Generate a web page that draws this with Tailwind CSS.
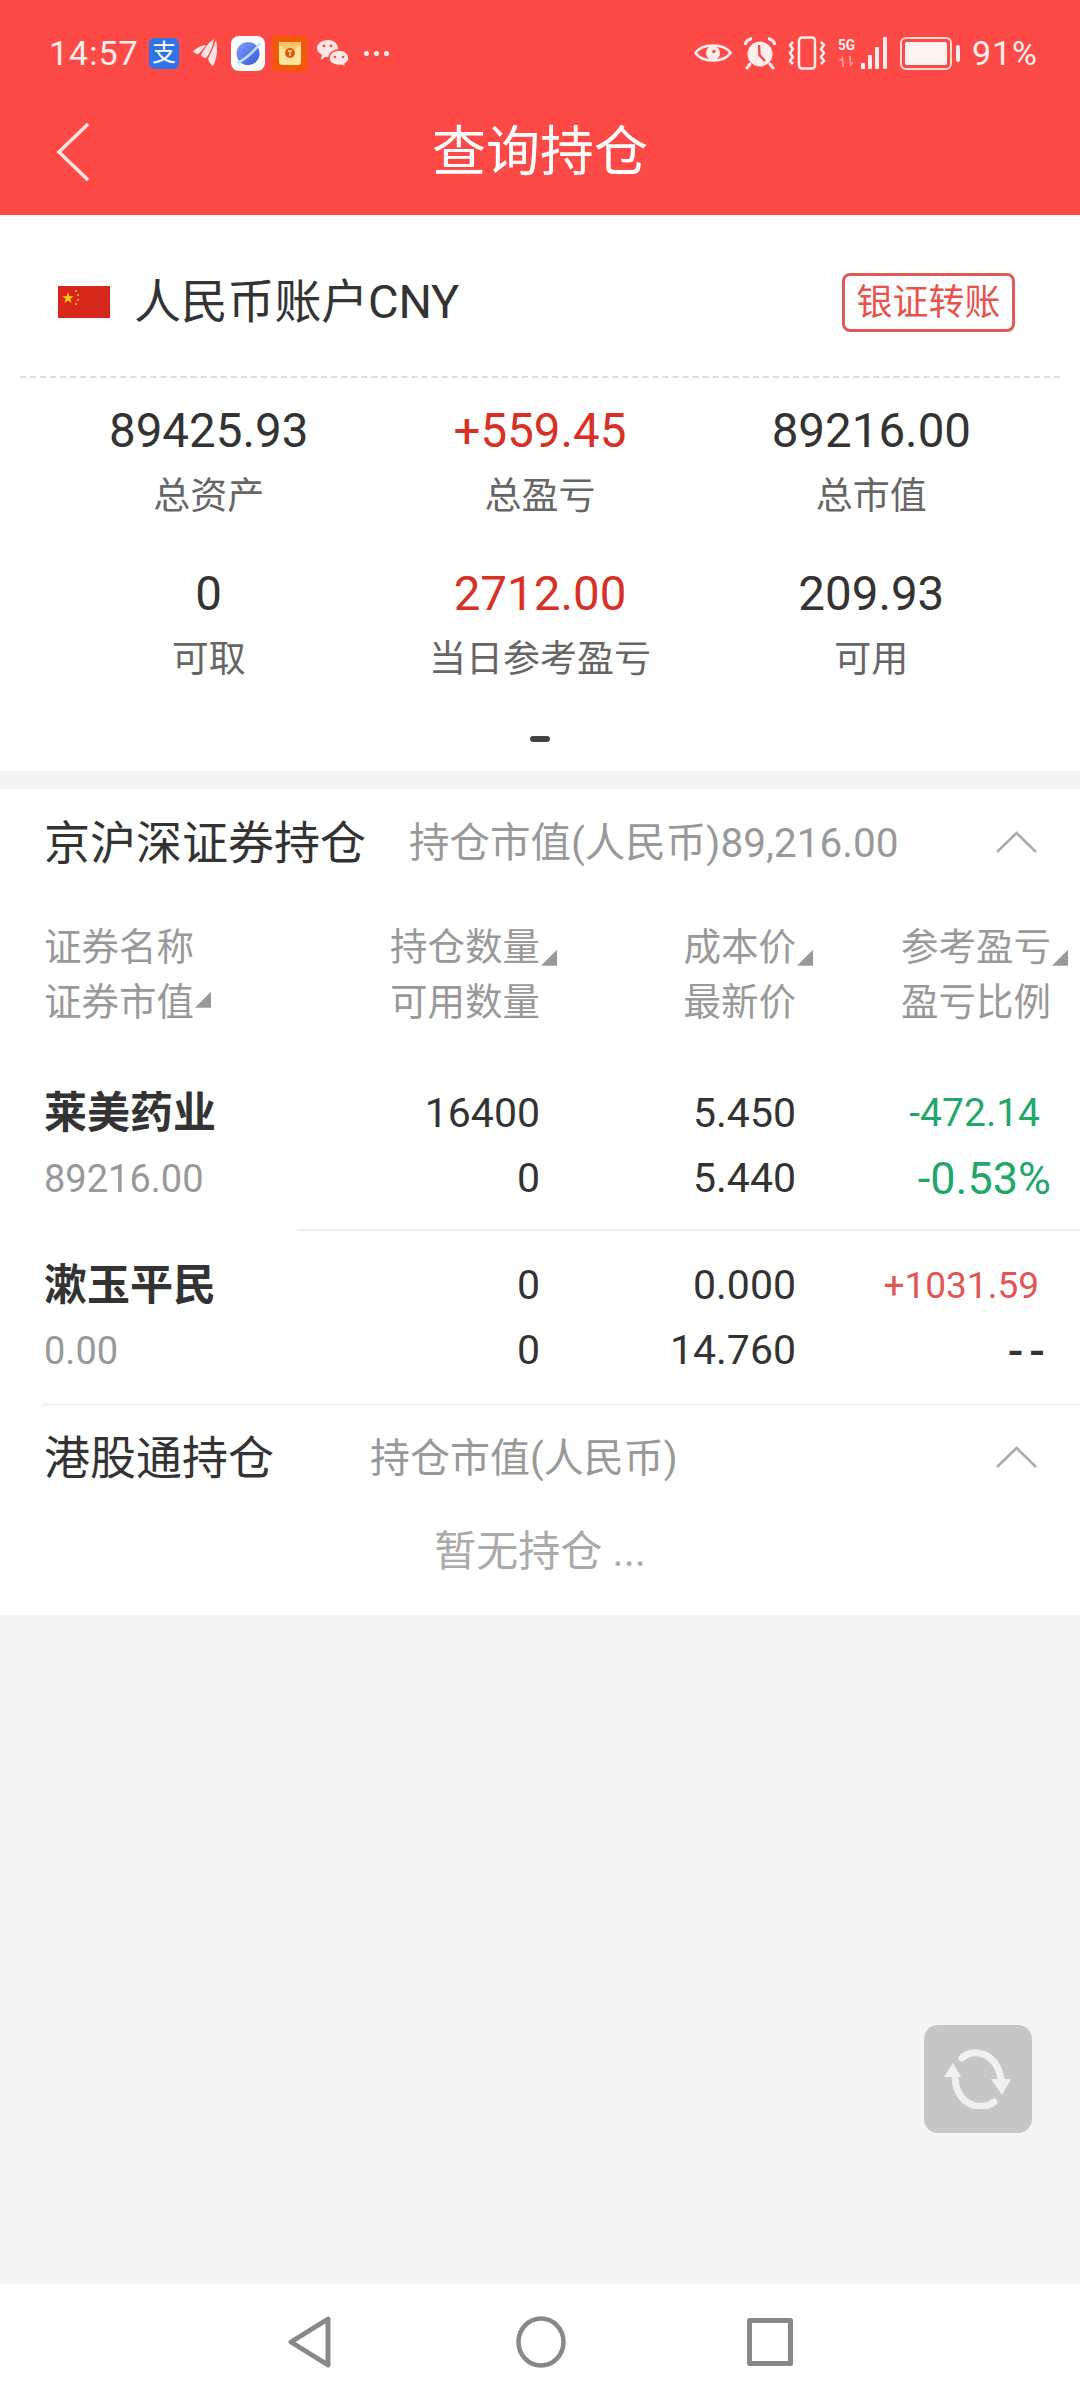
<!DOCTYPE html>
<html lang="zh-CN">
<head>
  <meta charset="UTF-8"/>
  <meta name="viewport" content="width=device-width,initial-scale=1.0"/>
  <title>查询持仓</title>
  <script src="https://cdn.jsdelivr.net/npm/@tailwindcss/browser@4"></script>
</head>
<body class="bg-[#f5f5f5] text-[#333] font-[Roboto,'Noto_Sans_CJK_SC',sans-serif]">
<div class="relative w-[1080px] h-[2400px] flex flex-col overflow-hidden">

  <!-- HEADER -->
  <div class="bg-[#fe4a46] text-white">
    <!-- status bar -->
    <div class="h-[106px] flex items-center pl-[49px] pr-[42px] text-[#ffeeee]">
      <span class="text-[34px] leading-none tracking-[1px] w-[90px]">14:57</span>
      <!-- alipay -->
      <span class="ml-[10px] w-[30px] h-[31px] rounded-[6px] bg-[#2f73e8] text-white text-[24px] leading-[31px] text-center">支</span>
      <!-- swallow -->
      <svg class="ml-[14px]" width="25" height="30" viewBox="0 0 25 30" fill="#ffe5e3"><path d="M0 13 C5 9 9 7 13 7 C10 11 7 15 5 16 C3 16 1 15 0 13Z"/><path d="M8 17 C11 11 15 5 21 1 C20 8 17 15 13 20 C11 20 9 19 8 17Z"/><path d="M15 21 C18 15 21 8 23 2 C25 10 24 21 20 28 C18 27 16 24 15 21Z"/></svg>
      <!-- planet -->
      <svg class="ml-[13px]" width="34" height="35" viewBox="0 0 34 35"><defs><linearGradient id="pl" x1="0" y1="0" x2="1" y2="1"><stop offset="0" stop-color="#7fa0ff"/><stop offset="1" stop-color="#3557d8"/></linearGradient></defs><rect width="34" height="35" rx="8" fill="#fff"/><circle cx="17" cy="17.5" r="11.5" fill="url(#pl)"/><path d="M6 27 C12 25 24 15 29 7" stroke="#bfe0ff" stroke-width="2.5" fill="none"/></svg>
      <!-- red packet -->
      <svg class="ml-[8px]" width="34" height="35" viewBox="0 0 34 35"><rect width="34" height="35" fill="#f45a06"/><rect x="6" y="6" width="22" height="23" rx="3" fill="#ffe59a"/><path d="M6 9 L17 17 L28 9 L28 6 L6 6Z" fill="#f8c66a"/><circle cx="17" cy="17" r="5" fill="#e2570c"/><path d="M15 15h4M17 15v5" stroke="#ffe59a" stroke-width="1.3"/></svg>
      <!-- wechat -->
      <svg class="ml-[10px]" width="32" height="29" viewBox="0 0 32 29" fill="#ffe8e6"><path d="M11 1 C17 1 21 5 21 9 C21 13 17 18 11 18 L8 18 L4 21 L5 16 C2 14 0 12 0 9 C0 5 5 1 11 1Z"/><path d="M22 11 C27 11 32 14 32 19 C32 22 30 24 28 25 L29 28 L25 26.5 C19 27 12 25 12 19 C12 14 17 11 22 11Z" stroke="#fe4a46" stroke-width="1.5"/><g fill="#fe4a46"><circle cx="7" cy="7" r="1.4"/><circle cx="14" cy="7" r="1.4"/><circle cx="18" cy="18" r="1.3"/><circle cx="26" cy="18" r="1.3"/></g></svg>
      <!-- dots -->
      <span class="ml-[15px] flex gap-[5px]"><i class="block w-[5px] h-[5px] rounded-full bg-[#ffeeee]"></i><i class="block w-[5px] h-[5px] rounded-full bg-[#ffeeee]"></i><i class="block w-[5px] h-[5px] rounded-full bg-[#ffeeee]"></i></span>

      <div class="ml-auto flex items-center">
        <!-- eye -->
        <svg width="38" height="26" viewBox="0 0 38 26"><path d="M1.5 13 C8 3 30 3 36.5 13 C30 23 8 23 1.5 13Z" fill="none" stroke="#ffeeee" stroke-width="2.5"/><circle cx="19" cy="13" r="7" fill="#ffeeee"/><circle cx="20" cy="11.5" r="1.8" fill="#fe4a46"/></svg>
        <!-- alarm -->
        <svg class="ml-[12px]" width="32" height="33" viewBox="0 0 32 33"><circle cx="16" cy="17" r="12.5" fill="#ffeeee"/><path d="M1 8 C2 4 5 2 8 1.5 M31 8 C30 4 27 2 24 1.5" stroke="#ffeeee" stroke-width="3" fill="none"/><path d="M6 27 L3 31 M26 27 L29 31" stroke="#ffeeee" stroke-width="3" stroke-linecap="round"/><path d="M15 8 L15.500 18 L21 24" stroke="#fe4a46" stroke-width="2.4" fill="none"/></svg>
        <!-- vibrate -->
        <svg class="ml-[12px]" width="38" height="34" viewBox="0 0 38 34" fill="none" stroke="#ffeeee" stroke-width="2.500"><rect x="11" y="1.500" width="16" height="31" rx="3"/><path d="M5 6 L2 9 L5 13 L2 17 L5 21 L2 25 L5 28"/><path d="M33 6 L36 9 L33 13 L36 17 L33 21 L36 25 L33 28"/></svg>
        <!-- 5G and signal -->
        <svg class="ml-[12px]" width="50" height="34" viewBox="0 0 50 34"><text x="0" y="14" font-size="15" font-weight="700" fill="#ffeeee" font-family="Roboto" textLength="17" lengthAdjust="spacingAndGlyphs">5G</text><path d="M5 20 L1 25 L4 25 L4 31 L6 31 Z M12 31 L16 26 L13 26 L13 20 L11 20 Z" fill="#ff9a96"/><g fill="#ffeeee"><rect x="23" y="27" width="4" height="6" rx="1"/><rect x="30" y="19" width="4" height="14" rx="1"/><rect x="37" y="11" width="4" height="22" rx="1"/><rect x="45" y="1" width="4" height="32" rx="1"/></g></svg>
        <!-- battery -->
        <div class="ml-[12px] w-[52px] h-[33px] rounded-[6px] border-[2.5px] border-[#ffdcda] p-[3px]"><div class="w-full h-full rounded-[2px] bg-[#fff3f2]"></div></div>
        <div class="ml-[4px] w-[4px] h-[17px] rounded-[2px] bg-[#ffeeee]"></div>
        <span class="ml-[12px] text-[34px] leading-none tracking-[1px]">91%</span>
      </div>
    </div>
    <!-- nav -->
    <div class="relative h-[109px] pb-[16px] flex items-center justify-center">
      <svg class="absolute left-[56px] top-[16px]" width="34" height="60" viewBox="0 0 34 60" fill="none" stroke="#ffe3e1" stroke-width="3.500"><path d="M32 2 L3 30 L32 58"/></svg>
      <h1 class="text-[54px] leading-none font-normal">查询持仓</h1>
    </div>
  </div>

  <!-- ACCOUNT CARD -->
  <div class="bg-white">
    <div class="h-[161px] pt-[12px] pl-[58px] pr-[65px] flex items-center">
      <svg width="52" height="32" viewBox="0 0 52 32"><rect width="52" height="32" fill="#d8261c"/><path d="M10 6l1.400 4.200h4.400l-3.600 2.600 1.400 4.200-3.600-2.600-3.600 2.600 1.400-4.200-3.600-2.600h4.400z" fill="#fbd116"/><g fill="#fbd116"><circle cx="18" cy="5" r="1"/><circle cx="20" cy="9" r="1"/><circle cx="20" cy="14" r="1"/><circle cx="18" cy="18" r="1"/></g></svg>
      <span class="ml-[24px] text-[47px] leading-none tracking-[-0.2px]">人民币账户CNY</span>
      <button class="relative top-[1px] ml-auto w-[173px] h-[59px] rounded-[8px] border-[3px] border-[#e05a55] text-[#e8524d] text-[36px] leading-none">银证转账</button>
    </div>
    <div class="mx-[20px] border-t-2 border-dashed border-[#ddd]"></div>

    <div class="pt-[23px] px-[43px] grid grid-cols-3 gap-y-[37px] text-center">
      <div>
        <div class="h-[60px] leading-[60px] text-[47.5px]">89425.93</div>
        <div class="mt-[6px] h-[60px] leading-[60px] text-[37px] text-[#666]">总资产</div>
      </div>
      <div>
        <div class="h-[60px] leading-[60px] text-[47.5px] text-[#d93026]">+559.45</div>
        <div class="mt-[6px] h-[60px] leading-[60px] text-[37px] text-[#666]">总盈亏</div>
      </div>
      <div>
        <div class="h-[60px] leading-[60px] text-[47.5px]">89216.00</div>
        <div class="mt-[6px] h-[60px] leading-[60px] text-[37px] text-[#666]">总市值</div>
      </div>
      <div>
        <div class="h-[60px] leading-[60px] text-[47.5px]">0</div>
        <div class="mt-[6px] h-[60px] leading-[60px] text-[37px] text-[#666]">可取</div>
      </div>
      <div>
        <div class="h-[60px] leading-[60px] text-[47.5px] text-[#d93026]">2712.00</div>
        <div class="mt-[6px] h-[60px] leading-[60px] text-[37px] text-[#666]">当日参考盈亏</div>
      </div>
      <div>
        <div class="h-[60px] leading-[60px] text-[47.5px]">209.93</div>
        <div class="mt-[6px] h-[60px] leading-[60px] text-[37px] text-[#666]">可用</div>
      </div>
    </div>
    <div class="mt-[46px] mx-auto w-[20px] h-[6px] rounded-[3px] bg-[#444]"></div>
    <div class="h-[29px]"></div>
  </div>

  <!-- HOLDINGS -->
  <div class="mt-[18px] bg-white">
    <div class="h-[106px] pl-[44px] pr-[43px] flex items-center">
      <span class="pt-[1px] text-[46px] leading-none w-[365px]">京沪深证券持仓</span>
      <span class="pt-[3px] text-[40.5px] leading-none text-[#999]">持仓市值(人民币)89,216.00</span>
      <svg class="ml-auto" width="41" height="22" viewBox="0 0 41 22" fill="none" stroke="#aaa" stroke-width="2.500"><path d="M1 21 L20.500 2 L40 21"/></svg>
    </div>

    <!-- table head -->
    <div class="pt-[25px] pl-[44px] pr-[29px] grid grid-cols-[255px_241px_256px_255px] auto-rows-[55px] items-center text-right text-[37.5px] leading-none text-[#999]">
      <span class="text-left">证券名称</span>
      <span class="relative">持仓数量<i class="absolute left-full top-[21px] ml-[1px] w-[16px] h-[16px] bg-[#999] [clip-path:polygon(100%_0,100%_100%,0_100%)]"></i></span>
      <span class="relative">成本价<i class="absolute left-full top-[21px] ml-[1px] w-[16px] h-[16px] bg-[#999] [clip-path:polygon(100%_0,100%_100%,0_100%)]"></i></span>
      <span class="relative">参考盈亏<i class="absolute left-full top-[21px] ml-[1px] w-[16px] h-[16px] bg-[#999] [clip-path:polygon(100%_0,100%_100%,0_100%)]"></i></span>
      <span class="text-left"><span class="relative">证券市值<i class="absolute left-full top-[12px] ml-[1px] w-[16px] h-[16px] bg-[#999] [clip-path:polygon(100%_0,100%_100%,0_100%)]"></i></span></span>
      <span>可用数量</span>
      <span>最新价</span>
      <span>盈亏比例</span>
    </div>

    <!-- rows -->
    <div class="mt-[51px] pl-[44px] pr-[29px] grid grid-cols-[255px_241px_256px_255px] auto-rows-[65px] items-center text-right text-[41px] leading-none">
      <span class="text-left text-[43px] font-bold">莱美药业</span>
      <span>16400</span>
      <span>5.450</span>
      <span class="pr-[11px] text-[39px] text-[#1fa86a]">-472.14</span>
      <span class="text-left text-[38px] text-[#999]">89216.00</span>
      <span>0</span>
      <span>5.440</span>
      <span class="text-[45px] text-[#1fa86a]">-0.53%</span>
    </div>
    <div class="mt-[18px] ml-[297px] h-[2px] bg-[#eee]"></div>
    <div class="mt-[22px] pl-[44px] pr-[29px] grid grid-cols-[255px_241px_256px_255px] auto-rows-[65px] items-center text-right text-[41px] leading-none">
      <span class="text-left text-[43px] font-bold">漱玉平民</span>
      <span>0</span>
      <span>0.000</span>
      <span class="pr-[12px] text-[37px] text-[#e25555]">+1031.59</span>
      <span class="text-left text-[38px] text-[#999]">0.00</span>
      <span>0</span>
      <span>14.760</span>
      <span class="text-[46px] font-medium tracking-[6px]">--</span>
    </div>
    <div class="mt-[20px] ml-[43px] h-[3px] bg-[#f4f4f4]"></div>

    <div class="h-[102px] pl-[44px] pr-[43px] flex items-center">
      <span class="pt-[1px] text-[46px] leading-none w-[326px]">港股通持仓</span>
      <span class="pt-[3px] text-[40px] leading-none text-[#999]">持仓市值(人民币)</span>
      <svg class="ml-auto" width="41" height="22" viewBox="0 0 41 22" fill="none" stroke="#aaa" stroke-width="2.500"><path d="M1 21 L20.500 2 L40 21"/></svg>
    </div>
    <div class="mt-[14px] h-[60px] leading-[60px] text-center text-[42px] text-[#aaa]">暂无持仓 ...</div>
    <div class="h-[33px]"></div>
  </div>

  <!-- REFRESH -->
  <div class="absolute left-[924px] top-[2025px] w-[108px] h-[108px] rounded-[14px] bg-[#c6c6c6] flex items-center justify-center">
    <svg width="68" height="60" viewBox="0 0 68 60" fill="none"><path d="M18 9 C28 -1 52 2 57 30" stroke="#f0f0f0" stroke-width="7" stroke-linecap="round"/><path d="M50 53 C38 62 14 58 11 30" stroke="#f0f0f0" stroke-width="7" stroke-linecap="round"/><path d="M47 30 H67 L58 46Z" fill="#f0f0f0"/><path d="M0 28 H17 L9 14Z" fill="#f0f0f0"/></svg>
  </div>

  <!-- ANDROID NAV -->
  <div class="absolute left-0 right-0 bottom-0 h-[116px] bg-white flex items-center justify-center">
    <svg width="44" height="52" viewBox="0 0 44 52" fill="none" stroke="#888" stroke-width="5" stroke-linejoin="round"><path d="M40 3 L3 26 L40 49Z"/></svg>
    <svg class="ml-[184px]" width="50" height="52" viewBox="0 0 50 52" fill="none" stroke="#888" stroke-width="4.500"><ellipse cx="25" cy="26" rx="22.500" ry="23.500"/></svg>
    <svg class="ml-[181px]" width="46" height="48" viewBox="0 0 46 48" fill="none" stroke="#888" stroke-width="5" stroke-linejoin="round"><rect x="2.500" y="2.500" width="41" height="43"/></svg>
  </div>
</div>
</body>
</html>
